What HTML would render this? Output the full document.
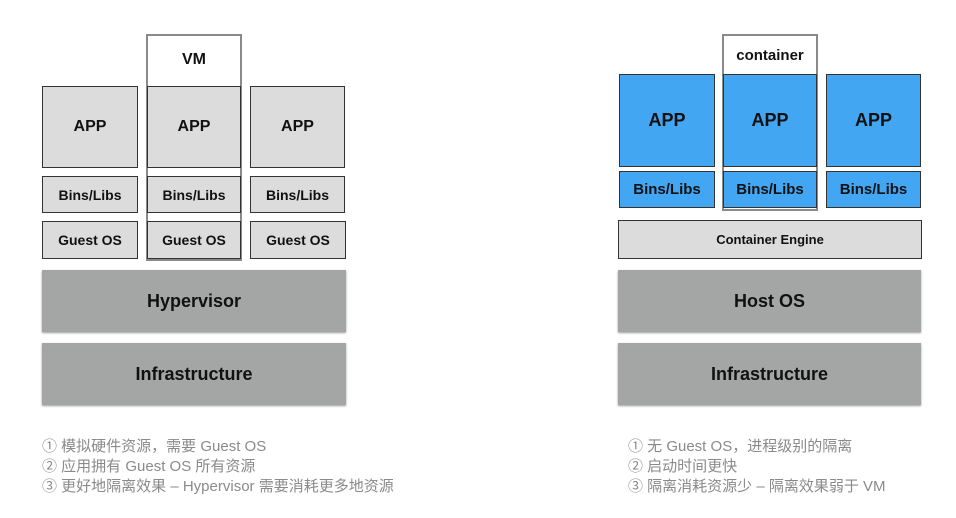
<!DOCTYPE html><html><head><meta charset="utf-8"><style>
body{margin:0;width:956px;height:518px;background:#fff;position:relative;font-family:"Liberation Sans","Noto Sans CJK SC",sans-serif;overflow:hidden}
.b{position:absolute;box-sizing:border-box;display:flex;align-items:center;justify-content:center;font-weight:bold;color:#111}
.g{background:#dcdcdc;border:1.5px solid #333}
.bl{background:#42a6f3;border:1.5px solid #333}
.d{background:#a4a6a6;box-shadow:0 1px 2px #999}
.o{position:absolute;box-sizing:border-box;border:2px solid #8a8a8a}
.t{position:absolute;color:#8a8a8a;font-size:15px;line-height:20px}
</style></head><body>
<div class="o" style="left:146px;top:34px;width:96px;height:227px"></div>
<div class="b" style="left:146px;top:36px;width:96px;height:48px;font-size:16px">VM</div>
<div class="b g" style="left:42px;top:86px;width:96px;height:82px;font-size:16px">APP</div>
<div class="b g" style="left:147px;top:86px;width:94px;height:82px;font-size:16px">APP</div>
<div class="b g" style="left:250px;top:86px;width:95px;height:82px;font-size:16px">APP</div>
<div class="b g" style="left:42px;top:176px;width:96px;height:37px;font-size:14px">Bins/Libs</div>
<div class="b g" style="left:147px;top:176px;width:94px;height:37px;font-size:14px">Bins/Libs</div>
<div class="b g" style="left:250px;top:176px;width:95px;height:37px;font-size:14px">Bins/Libs</div>
<div class="b g" style="left:42px;top:221px;width:96px;height:38px;font-size:14px">Guest OS</div>
<div class="b g" style="left:147px;top:221px;width:94px;height:38px;font-size:14px">Guest OS</div>
<div class="b g" style="left:250px;top:221px;width:96px;height:38px;font-size:14px">Guest OS</div>
<div class="b d" style="left:42px;top:270px;width:304px;height:62px;font-size:18px">Hypervisor</div>
<div class="b d" style="left:42px;top:343px;width:304px;height:62px;font-size:18px">Infrastructure</div>

<div class="o" style="left:722px;top:34px;width:96px;height:177px"></div>
<div class="b" style="left:722px;top:36px;width:96px;height:38px;font-size:15px">container</div>
<div class="b bl" style="left:619px;top:74px;width:96px;height:93px;font-size:18px">APP</div>
<div class="b bl" style="left:723px;top:74px;width:94px;height:93px;font-size:18px">APP</div>
<div class="b bl" style="left:826px;top:74px;width:95px;height:93px;font-size:18px">APP</div>
<div class="b bl" style="left:619px;top:171px;width:96px;height:37px;font-size:15px">Bins/Libs</div>
<div class="b bl" style="left:723px;top:171px;width:94px;height:37px;font-size:15px">Bins/Libs</div>
<div class="b bl" style="left:826px;top:171px;width:95px;height:37px;font-size:15px">Bins/Libs</div>
<div class="b g" style="left:618px;top:220px;width:304px;height:39px;font-size:13px">Container Engine</div>
<div class="b d" style="left:618px;top:270px;width:303px;height:62px;font-size:18px">Host OS</div>
<div class="b d" style="left:618px;top:343px;width:303px;height:62px;font-size:18px">Infrastructure</div>

<div class="t" style="left:42px;top:437px">① 模拟硬件资源，需要 Guest OS<br>② 应用拥有 Guest OS 所有资源<br>③ 更好地隔离效果 – Hypervisor 需要消耗更多地资源</div>
<div class="t" style="left:628px;top:437px">① 无 Guest OS，进程级别的隔离<br>② 启动时间更快<br>③ 隔离消耗资源少 – 隔离效果弱于 VM</div>
</body></html>
